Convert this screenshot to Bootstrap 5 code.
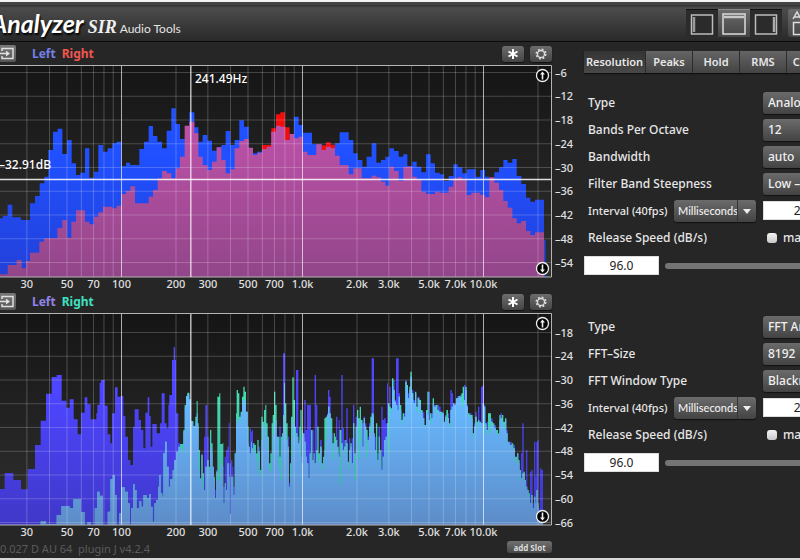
<!DOCTYPE html>
<html lang="en">
<head>
<meta charset="utf-8">
<meta name="viewport" content="width=device-width, initial-scale=1">
<title>Analyzer - SIR Audio Tools</title>
<link href="https://cdn.jsdelivr.net/npm/bootstrap@5.3.0/dist/css/bootstrap.min.css" rel="stylesheet">
<style>
body{background:#262626;color:#e6e6e6;font:12px/16px "Noto Sans","Open Sans",sans-serif;overflow:hidden;min-height:100vh;border-top:2px solid #f4f4f4;border-bottom:2px solid #d8d8d8}
.topbar{height:40px;background:linear-gradient(#303030,#4c4c4c 8%,#3c3c3c 50%,#292929);border-top:3px solid #444;border-bottom:1px solid #0c0c0c;overflow:hidden}
.title{padding-top:2px}
.product{font:italic bold 25px/32px Lato,sans-serif;color:#fff;text-shadow:1px 2px 2px #000;margin:0 4px 0 -9px}
.brand-sir{font:italic bold 18px/24px "Liberation Serif",serif;color:#f0f0f0;margin-right:3px}
.brand-tools{font:12px/24px Lato,sans-serif;color:#e4e4e4}
.views{margin-right:-22px}
.viewbtn{width:32px;height:28px;padding:0;border:0;border-top:1px solid #111;background:#2b2b2b}
.viewbtn.active{background:linear-gradient(#6a6a6a,#444);border-top-color:#888}
.viewbtn svg,.square svg,.arrowbtn svg,.inputbtn svg{display:block;margin:auto}
.abtn{width:34px;height:28px;margin-left:6px;border-radius:3px;background:linear-gradient(#6a6a6a,#444);border:0;padding:0}
.slotbar{height:23px;font-weight:bold;font-size:12px}
.inputbtn{width:20px;height:17px;margin-left:-4px;margin-right:16px;padding:0;border:0;border-radius:2px;background:linear-gradient(#777,#555)}
.left-a,.left-b{margin-right:6px}
.left-a{color:#7380e8}.right-a{color:#f0564f}.left-b{color:#9184ea}.right-b{color:#3fe0c0}
.square{width:22px;height:16px;padding:0;border:0;border-radius:3px;background:linear-gradient(#6c6c6c,#454545);box-shadow:0 1px 1px #111}
.tools{margin-right:28px;gap:6px}
.plot svg.graph{display:block;width:100%;height:auto}
.graph text{font:500 11px "Noto Sans",sans-serif;fill:#e0e0e0}
.graph .readout{font-size:12px;fill:#fff;font-weight:500}
.arrowbtn{position:absolute;right:30px;width:15px;height:15px;padding:0;border:0;background:none}
.arrowbtn.up{top:3px}.arrowbtn.down{bottom:14px}
.statusbar{height:18px;font-size:11px;color:#5c5c5c;padding-right:28px;white-space:pre}
.addslot{font:bold 8px/11px "Noto Sans",sans-serif;color:#ddd;width:45px;height:12px;padding:0;border:0;border-radius:3px;background:linear-gradient(#707070,#484848)}
.side{flex:0 0 220px;overflow:hidden;padding-left:4px;padding-top:9px;white-space:nowrap}
.tabs{width:300px;height:22px;margin-bottom:16px}
.tab{border:0;padding:0;width:47px;color:#e8e8e8;font-size:11px;font-weight:600;background:linear-gradient(#656565,#444);border-right:1px solid #333;box-shadow:0 1px 1px #111}
.tab.first{width:62px;background:linear-gradient(#343434,#484848)}
.tab.wide{width:62px}
.rowline{height:27px;width:300px;padding-left:4px;font-weight:500}
.rowline>label:first-child{width:175px;flex:none}
.rowline>label.narrow:first-child{width:86px;font-size:11px}
.rowline .dd,.unit{appearance:none;border:0;border-radius:3px;color:#f0f0f0;height:22px;padding:0 5px;font-size:12px;font-weight:500;line-height:22px;background:linear-gradient(#6b6b6b,#434343);box-shadow:0 1px 1px #111;width:110px}
.unitbox{position:relative;width:82px;margin-right:7px}
.unitbox .unit{width:82px;font-family:Lato,sans-serif;font-size:11px;padding:0 4px}
.unitbox::before{content:"";position:absolute;right:18px;top:0;height:22px;width:1px;background:#363636}
.unitbox::after{content:"";position:absolute;right:5px;top:9px;border:4px solid transparent;border-top:5px solid #eee;border-bottom:0}
.numbox{height:19px;border:1px solid #ddd;border-radius:0;background:#fff;color:#222;text-align:center;font-size:12px;padding:0;width:75px}
.tick{appearance:none;width:10px;height:10px;border-radius:3px;background:linear-gradient(#f4f4f4,#c8c8c8);margin:0 6px 0 4px}
.lvl{width:300px;height:29px}
.speed{appearance:none;width:200px;height:6px;border-radius:3px;background:#747474;margin-left:6px}
.speed::-webkit-slider-thumb{appearance:none;width:10px;height:16px;border-radius:3px;background:#ccc}
.group-b{margin-top:33px}
</style>
</head>
<body class="d-flex flex-column">
<header class="topbar d-flex align-items-center">
  <div class="title d-flex align-items-baseline"><h1 class="product">Analyzer</h1><span class="brand-sir">SIR</span><span class="brand-tools">Audio Tools</span></div>
  <div class="views d-flex ms-auto">
    <button class="viewbtn" aria-label="Left view"><svg width="26" height="24" fill="none"><rect x="2.500" y="3" width="21" height="19" stroke="#bcbcbc" stroke-width="1.500"/><path d="M5 5v15" stroke="#999" stroke-width="2.500"/></svg></button>
    <button class="viewbtn active" aria-label="Top view"><svg width="26" height="24" fill="none"><rect x="2" y="2" width="22" height="20" stroke="#dcdcdc" stroke-width="1.500"/><path d="M3 5h20" stroke="#c8c8c8" stroke-width="2.500"/></svg></button>
    <button class="viewbtn" aria-label="Right view"><svg width="26" height="24" fill="none"><rect x="2.500" y="3" width="21" height="19" stroke="#bcbcbc" stroke-width="1.500"/><path d="M21 5v15" stroke="#aaa" stroke-width="2.500"/></svg></button>
    <button class="abtn" aria-label="A/B compare"><svg class="d-block" width="34" height="28" fill="none" stroke="#ddd" stroke-width="1.500"><path d="M5 10l4-7 4 7M6.500 8h5M5.500 13.500h18v12h-18z"/></svg></button>
  </div>
</header>
<main class="d-flex flex-grow-1">
  <section class="flex-grow-1 d-flex flex-column overflow-hidden">
    <div class="slotbar d-flex align-items-center">
      <button class="inputbtn" aria-label="Input"><svg width="20" height="17" fill="none" stroke="#e0e0e0" stroke-width="1.500"><path d="M6 6V3.500h11v10H6V11M1 8.500h10"/><path d="M10 5.500l4 3-4 3z" fill="#e0e0e0" stroke="none"/></svg></button>
      <span class="left-a">Left</span><span class="right-a">Right</span>
      <div class="tools d-flex ms-auto">
        <button class="square" aria-label="Freeze"><svg width="22" height="16" stroke="#fff" stroke-width="2"><path d="M11 3v10M6.500 5.500l9 5M6.500 10.500l9-5"/></svg></button>
        <button class="square" aria-label="Settings"><svg width="22" height="16" fill="none" stroke="#ddd"><circle cx="11" cy="8" r="3.500" stroke-width="1.300"/><circle cx="11" cy="8" r="4.700" stroke-width="1.600" stroke-dasharray="1.900 1.800"/></svg></button>
      </div>
    </div>
    <div class="plot position-relative">
      <svg class="graph" id="octave" viewBox="0 0 580 225" role="img" aria-label="Octave band spectrum"></svg>
      <button class="arrowbtn up" aria-label="Range up"><svg width="15" height="15"><circle cx="7.500" cy="7.500" r="6" fill="#000" stroke="#eee" stroke-width="1.300"/><path d="M7.500 3.500l2.500 3h-1.700v5h-1.600v-5H5z" fill="#eee"/></svg></button>
      <button class="arrowbtn down" aria-label="Range down"><svg width="15" height="15"><circle cx="7.500" cy="7.500" r="6" fill="#000" stroke="#eee" stroke-width="1.300"/><path d="M7.500 11.500l2.500-3h-1.700v-5h-1.600v5H5z" fill="#eee"/></svg></button>
    </div>
    <div class="slotbar d-flex align-items-center">
      <button class="inputbtn" aria-label="Input"><svg width="20" height="17" fill="none" stroke="#e0e0e0" stroke-width="1.500"><path d="M6 6V3.500h11v10H6V11M1 8.500h10"/><path d="M10 5.500l4 3-4 3z" fill="#e0e0e0" stroke="none"/></svg></button>
      <span class="left-b">Left</span><span class="right-b">Right</span>
      <div class="tools d-flex ms-auto">
        <button class="square" aria-label="Freeze"><svg width="22" height="16" stroke="#fff" stroke-width="2"><path d="M11 3v10M6.500 5.500l9 5M6.500 10.500l9-5"/></svg></button>
        <button class="square" aria-label="Settings"><svg width="22" height="16" fill="none" stroke="#ddd"><circle cx="11" cy="8" r="3.500" stroke-width="1.300"/><circle cx="11" cy="8" r="4.700" stroke-width="1.600" stroke-dasharray="1.900 1.800"/></svg></button>
      </div>
    </div>
    <div class="plot position-relative">
      <svg class="graph" id="fft" viewBox="0 0 580 225" role="img" aria-label="FFT spectrum"></svg>
      <button class="arrowbtn up" aria-label="Range up"><svg width="15" height="15"><circle cx="7.500" cy="7.500" r="6" fill="#000" stroke="#eee" stroke-width="1.300"/><path d="M7.500 3.500l2.500 3h-1.700v5h-1.600v-5H5z" fill="#eee"/></svg></button>
      <button class="arrowbtn down" aria-label="Range down"><svg width="15" height="15"><circle cx="7.500" cy="7.500" r="6" fill="#000" stroke="#eee" stroke-width="1.300"/><path d="M7.500 11.500l2.500-3h-1.700v-5h-1.600v5H5z" fill="#eee"/></svg></button>
    </div>
    <footer class="statusbar d-flex align-items-center justify-content-between"><span class="pt-1">0.027 D AU 64  plugin J v4.2.4</span><button class="addslot">add Slot</button></footer>
  </section>
  <aside class="side">
    <nav class="tabs d-flex" aria-label="Settings pages"><button class="tab first">Resolution</button><button class="tab">Peaks</button><button class="tab">Hold</button><button class="tab">RMS</button><button class="tab wide">Channels</button></nav>
    <form>
      <div class="rowline d-flex align-items-center"><label for="t1">Type</label><select class="dd" id="t1"><option>Analog</option></select></div>
      <div class="rowline d-flex align-items-center"><label for="bpo">Bands Per Octave</label><select class="dd" id="bpo"><option>12</option></select></div>
      <div class="rowline d-flex align-items-center"><label for="bw">Bandwidth</label><select class="dd" id="bw"><option>auto</option></select></div>
      <div class="rowline d-flex align-items-center"><label for="st">Filter Band Steepness</label><select class="dd" id="st"><option>Low – fast</option></select></div>
      <div class="rowline d-flex align-items-center"><label class="narrow" for="i1">Interval (40fps)</label><div class="unitbox"><select class="unit" aria-label="Interval unit"><option>Milliseconds</option></select></div><input class="numbox" id="i1" value="25"></div>
      <div class="rowline d-flex align-items-center"><label for="r1">Release Speed (dB/s)</label><input type="checkbox" class="tick" id="m1"><label for="m1">max</label></div>
      <div class="lvl d-flex align-items-center"><input class="numbox" id="r1" value="96.0"><input type="range" class="speed" value="100" aria-label="Release speed"></div>
    </form>
    <form class="group-b">
      <div class="rowline d-flex align-items-center"><label for="t2">Type</label><select class="dd" id="t2"><option>FFT Analyzer</option></select></div>
      <div class="rowline d-flex align-items-center"><label for="fs">FFT–Size</label><select class="dd" id="fs"><option>8192</option></select></div>
      <div class="rowline d-flex align-items-center"><label for="fw">FFT Window Type</label><select class="dd" id="fw"><option>Blackman</option></select></div>
      <div class="rowline d-flex align-items-center"><label class="narrow" for="i2">Interval (40fps)</label><div class="unitbox"><select class="unit" aria-label="Interval unit"><option>Milliseconds</option></select></div><input class="numbox" id="i2" value="25"></div>
      <div class="rowline d-flex align-items-center"><label for="r2">Release Speed (dB/s)</label><input type="checkbox" class="tick" id="m2"><label for="m2">max</label></div>
      <div class="lvl d-flex align-items-center"><input class="numbox" id="r2" value="96.0"><input type="range" class="speed" value="100" aria-label="Release speed"></div>
    </form>
  </aside>
</main>
<script src="https://cdn.jsdelivr.net/npm/bootstrap@5.3.0/dist/js/bootstrap.bundle.min.js"></script>
<script>
// Traces are "x level" steps in thirds of a plot unit; each block carries its own origin.
const parse = (blocks, n) => blocks.flatMap(([ox, oy, s]) => {
  const v = s.trim().split(/[\s;]+/).map(Number), out = [];
  for (let i = 0; i < v.length; i += n) out.push([(v[i] + ox) / 3, ...v.slice(i + 1, i + n).map(y => (y + oy) / 3)]);
  return out;
});
const steps = (pts, col, end) => {
  let d = `M${pts[0][0]} 212`;
  pts.forEach((p, i) => { d += `V${Math.min(212, p[col])}H${i + 1 < pts.length ? pts[i + 1][0] : end}`; });
  return d + 'V212Z';
};
const fx = f => 121.5 + 181 * Math.log10(f / 100);
function grid(first, y0, count) {
  let g = '';
  for (let f of [30,40,50,60,70,80,90,100,200,300,400,500,600,700,800,900,1000,2000,3000,4000,5000,6000,7000,8000,9000,10000,20000]) {
    const major = f === 100 || f === 1000 || f === 10000;
    g += `<path d="M${fx(f)} 1V212" stroke="#fff" stroke-opacity="${major ? .65 : .22}" stroke-width="1"/>`;
  }
  for (let i = 0; i < count; i++) {
    const y = y0 + i * 23.75;
    g += `<path d="M0 ${y}H551" stroke="#fff" stroke-opacity=".2"/><text x="555" y="${y + 4}">–${first + i * 6}</text>`;
  }
  [[30,'30'],[50,'50'],[70,'70'],[100,'100'],[200,'200'],[300,'300'],[500,'500'],[700,'700'],[1000,'1.0k'],[2000,'2.0k'],[3000,'3.0k'],[5000,'5.0k'],[7000,'7.0k'],[10000,'10.0k']].forEach(([f, t]) => {
    g += `<text x="${fx(f)}" y="223" text-anchor="middle">${t}</text>`;
  });
  return g + '<path d="M0 .5H551.500V212H0" fill="none" stroke="#b4b4b4"/><path d="M190.800 1V212" stroke="#fff" stroke-opacity=".7" stroke-width="1.500"/>';
}
const grad = (id, a, b, y) => `<linearGradient id="${id}" gradientUnits="userSpaceOnUse" x1="0" x2="0" y1="${y}" y2="212"><stop stop-color="${a}"/><stop offset="1" stop-color="${b}"/></linearGradient>`;

const blue = parse([[0,-15,"0 475 8 468 23 434 37 472 63 480 90 430 105 408 119 370 133 350 145 270 159 215 173 206 187 282 201 240 215 310 228 345 241 338 255 265 268 353 282 335 295 309 295 255 309 275 323 265 337 250 350 245 364 318 378 308 390 315 418 267 432 245 446 198 459 228 472 245 486 265 500 212 514 145 527 192 540 237 554 237 568 157"],
[540,-15,"43 202 55 245 68 225 82 242 96 272 110 262 124 255 137 213 151 255 164 240 178 181 192 200 206 265 219 280 232 275 246 260 260 260 274 215 288 200 301 200 315 240 329 222 342 170 356 195 369 218 396 253 409 253 425 270 438 260 452 265 465 250 479 217 506 240 520 280 533 300 547 320 560 290"],
[1110,-75,"5 310 19 368 33 360 46 350 58 325 72 333 86 350 100 343 112 378 127 365 140 380 154 397 168 343 182 370 195 398 209 403 222 423 236 408 250 373 263 382 277 400 290 388 317 410 331 390 345 410 358 415 373 397 387 382 400 360 413 368 427 357 440 408 454 432 468 473 481 485 495 479 522 600"]], 2);
const red = parse([[540,-15,"246 255 274 205 288 163 301 157 315 202 329 700 425 256 438 247 452 254"]], 2);
const pink = parse([[0,-15,"0 643 23 615 50 600 65 625 78 603 90 578 118 545 132 535 172 504 187 480 201 533 214 485 228 451 255 485 268 493 282 470 295 457 309 440 337 445 350 437 364 402 378 393 391 379 405 430 446 410 459 390 473 355 486 333 500 340 514 355 527 325 540 290 554 197 568 185"],
[540,-15,"43 220 55 290 68 315 82 330 96 305 110 262 124 300 137 340 151 328 164 265 178 243 192 237 206 263 219 285 232 278 246 267 260 260 274 215 288 197 301 200 315 240 329 222 342 235 356 230 369 275 382 285 409 253 425 270 438 260 452 265 465 287 479 315 506 343 520 325 545 355"],
[1110,-75,"0 415 5 407 19 412 33 425 46 437 58 380 72 393 86 423 100 380 127 410 140 420 154 455 168 462 195 455 209 458 236 440 250 415 263 412 277 420 290 465 304 458 331 465 345 472 358 412 373 428 387 450 400 483 413 503 427 535 440 550 454 543 468 573 481 585 495 577"]], 2);
document.getElementById('octave').innerHTML =
  `<defs>${grad('bg','#151515','#303030',0)}${grad('gb','#2050ff','#2340d8',90)}${grad('gp','#c052aa','#92468a',50)}</defs>
  <rect width="551" height="212" fill="url(#bg)"/><path d="${steps(blue,1,545.5)}" fill="url(#gb)"/><path d="${steps(red,1,335)}" fill="#f20d0d"/>
  <path d="${steps(pink,1,544)}" fill="url(#gp)"/>` + grid(6, 7.5, 9) +
  `<path d="M0 114.500H551" stroke="#fff" stroke-opacity=".85" stroke-width="1.300"/><text class="readout" x="195" y="18">241.49Hz</text><text class="readout" x="-1" y="104">–32.91dB</text>`;

const L = parse([[0,-69,"0 597 14 549 40 570 63 598 83 537 105 465 122 392 138 311 155 261 170 255 185 332 199 353 209 328 221 388 233 433 243 368 254 322 262 343 272 388 289 370 292 345 299 278 303 270 314 347 323 433 331 460 336 370 345 292 353 320 362 318 370 378 376 440 384 510 391 525 399 410 404 358 416 390 423 420 430 475 436 368 443 322 448 378 452 470 457 402 470 430 480 400 485 310 494 400 500 415 505 345 508 315 516 210 521 172 525 210 528 370 535 460"]], 2);
const R = parse([[0,-69,"0 705 122 694 138 703 170 675 184 648 209 655 220 628 243 666 254 705 262 697 272 705 284 655 291 605 299 617 309 705 323 665 331 568 338 555 345 615 350 705 357 670 364 592 375 605 384 640 390 705 393 655 399 583 404 600 410 655 418 633 424 650 430 615 440 625 447 612 452 650 458 695 463 640 468 630 474 590 478 555 482 610 487 620 490 490 495 455 500 530 506 590 510 568 518 540 522 510 528 485 535 470"]], 2);
const both = parse([[540,-69,`0 475 462;6 490 462;10 425 420;14 350 345;18 322 318;22 312 308;28 330 328;33 395 393;40 410 408;46 400 380;50 370 333;53 410 400;56 540 480;60 570 565;64 490 495;68 590 550;72 440 600;76 345 530;82 440 510;86 540 530;90 470 420;94 490 460;98 530 530;102 570 560;105 600 625;108 540 545;112 570 320;118 575 310;121 520 462;127 530 460;130 590 640;134 500 580;138 480 600;142 470 520;146 400 560;149 520 672;153 510 560;157 530 560;160 590 615;164 490 490;168 400 370;170 390 300;174 385 310;178 400 380;182 370 365;186 330 320;190 345 290;194 330 305;198 365 365;203 460 410;206 470 470;209 415 490;213 425 455;216 420 475;219 490 460;224 480 465;228 510 490;232 545 450;236 470 485;240 560 540;244 450 380;248 400 395;252 410 360;256 420 345;259 440 400;263 480 440;267 540 520;271 545 490;275 510 400;278 430 375;282 400 305;286 390 345;290 440 440;294 530 440;298 410 500;302 570 440;306 450 430;309 190 375;312 190 280;315 430 340;319 450 400;323 440 470;327 580 590;330 560 520;333 500 380;337 400 262;341 385 330;345 440 410;348 240 430;352 240 440;355 460 460;358 450 410;361 500 360;365 420 520;369 440 430;373 330 455;377 420 500;381 345 520;385 345 565;389 345 490;393 510 420;397 420 510;401 520 490;404 255 520;408 345 480;412 520 410;416 510 490;420 450 470;425 540 520;429 520 500;433 480 385;437 450 380;441 370 375;444 300 350;448 320 370;452 430 385;457 510 460;461 460 430;465 460 440;468 380 450;472 490 470;476 390 500;479 585 420;484 255 460;488 415 480;492 450 470;496 490 450;499 355 460;503 540 515;507 445 480;511 470 460;515 445 520;519 345 400;523 570 490;527 380 410;531 390 360;535 510 385;539 460 350;543 390 390;547 400 470;551 380 385;555 400 410;559 505 420;563 440 450;567 400 410;571 430 380;575 205 370;580 205 375;582 430 430`],
[1110,-69,`14 440 480;18 510 400;22 490 510;26 410 440;30 530 480;34 350 540;38 390 500;42 385 450;47 400 440;51 280 400;54 490 340;58 290 350;62 365 355;66 290 265;70 270 300;74 330 335;78 205 345;82 205 360;86 310 320;90 360 345;94 400 390;98 385 370;102 370 380;106 270 275;110 290 285;114 310 325;118 300 290;121 260 245;125 300 310;130 330 340;135 310 305;139 365 350;143 320 325;148 340 330;153 370 360;158 365 385;163 410 405;168 365 360;172 375 305;176 305 390;180 400 370;184 370 385;188 340 325;192 345 350;197 370 345;202 345 360;207 350 365;212 375 365;217 365 370;221 400 395;225 375 380;229 390 360;234 370 385;237 410 400;241 300 360;245 310 350;249 345 340;253 340 345;258 325 325;262 318 325;266 320 318;270 315 320;274 335 310;278 350 290;282 285 330;286 300 290;290 345 350;294 380 370;299 370 375;304 385 375;308 440 430;312 400 410;316 365 380;320 410 395;324 350 390;328 400 395;333 290 400;338 285 340;342 345 350;346 430 400;350 395 420;354 410 370;358 430 370;363 385 395;368 410 400;373 405 415;378 430 420;384 435 430;388 390 375;392 370 385;396 400 375;400 415 395;405 390 385;409 420 430;413 460 455;419 455 465;425 475 460;430 465 475;435 515 500;441 490 490;445 520 510;449 570 540;453 490 565;457 400 550;461 550 545;465 580 570;468 480 590;472 600 600;476 620 610;480 545 640;484 540 615;488 640 655;492 455 620;496 560 640;499 455 600;503 450 640;506 655 680;510 535 660;514 540 680`]], 3);
const left = [...L, ...both.map(b => [b[0], b[1]])], right = [...R, ...both.map(b => [b[0], b[2]])];
document.getElementById('fft').innerHTML =
  `<defs>${grad('gl','#4d45ff','#4038c8',80)}${grad('gt','#42dcb0','#36a8a0',80)}${grad('gm','#66b8ff','#5d8cc8',90)}<clipPath id="lc"><path d="${steps(left,1,543)}"/></clipPath></defs>
  <rect width="551" height="212" fill="url(#bg)"/><path d="${steps(left,1,543)}" fill="url(#gl)"/><path d="${steps(right,1,543)}" fill="url(#gt)"/>
  <path d="${steps(right,1,543)}" fill="url(#gm)" clip-path="url(#lc)"/>` + grid(18, 19.5, 9);
</script>
</body>
</html>
